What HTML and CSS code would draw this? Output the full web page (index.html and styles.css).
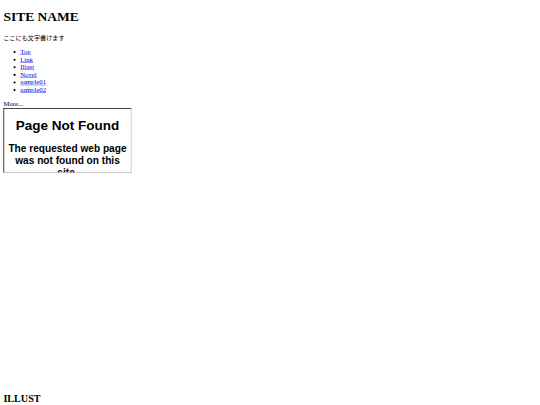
FILE: index.html
```html
<!DOCTYPE html>
<html>
<head>
<meta charset="utf-8">
<title>SITE NAME</title>
<link rel="stylesheet" href="styles.css">
</head>
<body>
<div class="page">
<header class="site-header">
<h1 class="site-title">SITE NAME</h1>
<p class="site-desc">ここにも文字書けます</p>
</header>
<nav class="site-nav">
<ul class="nav-list">
<li><a href="#">Top</a></li>
<li><a href="#">Link</a></li>
<li><a href="#">Illust</a></li>
<li><a href="#">Novel</a></li>
<li><a href="#">sample01</a></li>
<li><a href="#">sample02</a></li>
</ul>
</nav>
<div class="more">More...<br><div class="frame"><div class="frame-body"><h1 class="err-title">Page Not Found</h1><h2 class="err-text">The requested web page was not found on this site.</h2></div></div></div>
<div class="spacer"></div>
<h2 class="section-title">ILLUST</h2>
</div>
</body>
</html>
```
FILE: styles.css
```css
html {
  overflow: hidden;
}
body {
  margin: 0;
  background: #fff;
}
.page {
  width: 1264px;
  padding: 8px;
  transform: scale(0.421875);
  transform-origin: 0 0;
  font-family: "Liberation Serif", "Noto Sans CJK JP", serif;
  font-size: 16px;
  color: #000;
}
.site-title {
  font-size: 32px;
  margin: 13.44px 0 21.44px;
}
.site-desc {
  margin: 16px 0;
  font-size: 14.5px;
  line-height: 18px;
}
.nav-list {
  margin: 16px 0;
  padding-left: 40px;
}
.nav-list a {
  color: #0000ee;
}
.frame {
  display: inline-block;
  vertical-align: baseline;
  width: 300px;
  height: 150px;
  border: 2px inset #767676;
  border-color: #767676 #c3c3c3 #c3c3c3 #767676;
  overflow: hidden;
}
.frame-body {
  margin: 8px;
  font-family: "Liberation Sans", Arial, sans-serif;
  text-align: center;
}
.err-title {
  font-size: 32px;
  margin: 21.44px 0;
}
.err-text {
  font-size: 24px;
  margin: 19.92px 0;
}
.spacer {
  height: 498px;
}
.section-title {
  font-size: 24px;
  margin: 19.92px 0;
}
```
